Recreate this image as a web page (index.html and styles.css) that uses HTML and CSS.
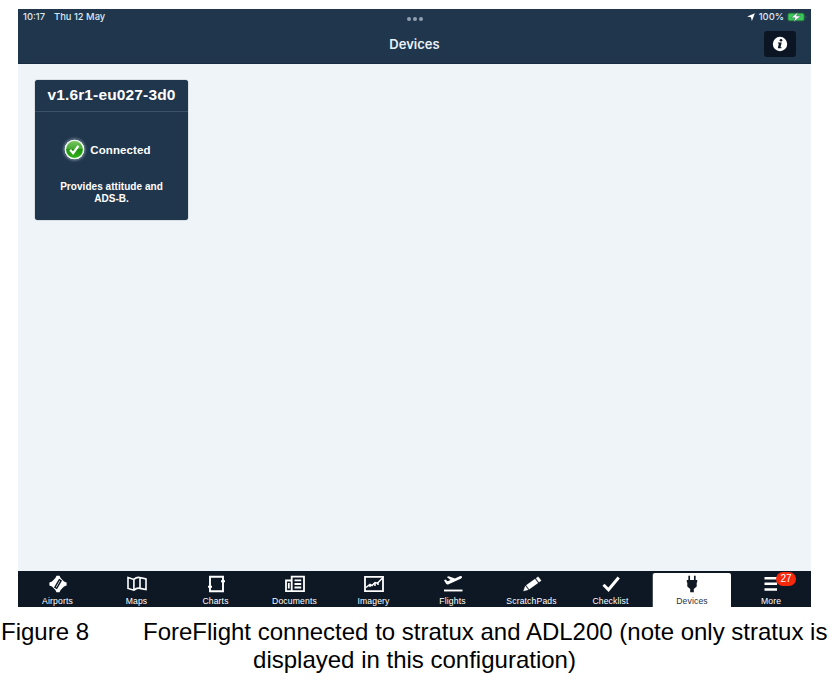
FILE: index.html
```html
<!DOCTYPE html>
<html lang="en">
<head>
  <meta charset="UTF-8">
  <meta name="viewport" content="width=device-width, initial-scale=1.0">
  <title>Devices</title>
  <link rel="stylesheet" href="styles.css">
</head>
<body>
  <figure class="figure">
    <div class="screen">
      <header class="header">
        <div class="status">
          <div class="status-left"><span class="time">10:17</span><span class="date">Thu 12 May</span></div>
          <div class="dots"><i></i><i></i><i></i></div>
          <div class="status-right">
            <svg class="location" viewBox="0 0 8 8"><path d="M7.9.2 4.9 7.9 3.9 4.3.1 3.5z"/></svg>
            <span class="percent">100%</span>
            <svg class="battery" viewBox="0 0 21 10">
              <rect x=".5" y=".5" width="18" height="9" rx="2.5" fill="#28783f"/>
              <rect x="1.5" y="1.5" width="16" height="7" rx="1.5" fill="#38c958"/>
              <path d="M19.7 3.5q1.2 1.5 0 3z" fill="#63788a"/>
              <path d="M11.3 0 4.5 5.8h4L7.3 10l7.1-6H10z" fill="#fff" stroke="#20364d" stroke-width=".4"/>
            </svg>
          </div>
        </div>
        <div class="titlebar">
          <h1>Devices</h1>
          <button class="info-btn" aria-label="Info">
            <svg viewBox="0 0 16 16">
              <circle cx="8" cy="8" r="7.2" fill="#fff"/>
              <circle cx="9" cy="4.2" r="1.3" fill="#0b1523"/>
              <path d="M6 6.5h3.7L8.5 11.2h1.2L9.2 12.2H5.8l1.1-4.8H5.8z" fill="#0b1523"/>
            </svg>
          </button>
        </div>
      </header>

      <main class="content">
        <section class="card">
          <h2>v1.6r1-eu027-3d0</h2>
          <div class="state">
            <svg class="check" viewBox="0 0 20 20">
              <defs>
                <linearGradient id="green" x1="0" y1="0" x2="0" y2="1">
                  <stop offset="0" stop-color="#7cc762"/>
                  <stop offset=".48" stop-color="#45a831"/>
                  <stop offset=".5" stop-color="#1e920f"/>
                  <stop offset="1" stop-color="#35b51d"/>
                </linearGradient>
              </defs>
              <circle cx="10" cy="10" r="8.8" fill="url(#green)" stroke="#eef7ee" stroke-width="1.6"/>
              <path d="m5.8 10.2 2.9 3.3 5-7" fill="none" stroke="#fff" stroke-width="2.2"/>
            </svg>
            <span>Connected</span>
          </div>
          <p>Provides attitude and<br>ADS-B.</p>
        </section>
      </main>

      <nav class="tabs">
        <a class="tab">
          <svg viewBox="0 0 20 18">
            <path d="M8.5.8h3L12.6 3 16 6.4l2.6 1.1v3L16 11.6 12.6 15l-1.1 2.2h-3L7.4 15 4 11.6 1.4 10.5v-3L4 6.4 7.4 3z" fill="#fff"/>
            <path d="m11.3 4.7 1.8 1-4.4 7.6-1.8-1z" fill="#fff" stroke="#0e1824" stroke-width="1.4"/>
          </svg>
          <span>Airports</span>
        </a>
        <a class="tab">
          <svg viewBox="0 0 20 18"><path d="M1 2.6 6.8 4.4Q10 1.6 13 2.6l6 1.4v10.6l-6-1.2Q10 12.5 7 15.2L1 13.4zM6.9 4.4V15M13 2.6v10.8" fill="none" stroke="#fff" stroke-width="1.6"/></svg>
          <span>Maps</span>
        </a>
        <a class="tab">
          <svg viewBox="0 0 20 18"><path d="M4 10V1.7h13V5M17 8v8.3H4V13M15 6.2h4M2 11.8h4M4 10v3M17 5v3" fill="none" stroke="#fff" stroke-width="1.9"/></svg>
          <span>Charts</span>
        </a>
        <a class="tab">
          <svg viewBox="0 0 20 18"><path d="M6.7 1.7H19v14.5H6.7zM6.7 5.5H1v10.7h5.7M3.8 8v5.5M9.5 5.4h6.7M9.5 9h6.7M9.5 12.5h6.7" fill="none" stroke="#fff" stroke-width="1.8"/></svg>
          <span>Documents</span>
        </a>
        <a class="tab">
          <svg viewBox="0 0 20 18"><path d="M1 1.8h18v14.4H1z" fill="none" stroke="#fff" stroke-width="1.8"/><path d="m2 12.5 4-3 2 1 3-3 2.5.7L18.5 3M6 9v3M11 7.5v3.5M14 7v3" fill="none" stroke="#fff" stroke-width="1.5"/></svg>
          <span>Imagery</span>
        </a>
        <a class="tab">
          <svg viewBox="0 0 20 18"><path d="M1 15.5h18.5" stroke="#fff" stroke-width="1.9"/><path d="m1 5.2 1.4-.6 2.2 1.6 3-1.3-3.8-3 1.9-.7 6.2 2.2 4.8-2.1q1.8-.6 2.3.4t-1.3 2L5.1 9.5q-1.2.4-2-.7z" fill="#fff"/></svg>
          <span>Flights</span>
        </a>
        <a class="tab">
          <svg viewBox="0 0 20 18"><path d="m1.5 16 1.8-5 3 3.8zM4.2 10.3 13 4l3 3.9-8.8 6.3zM14 3.3 16.2 1.7l3 3.9L17 7.2z" fill="#fff" stroke="#fff" stroke-width=".3"/></svg>
          <span>ScratchPads</span>
        </a>
        <a class="tab">
          <svg viewBox="0 0 20 18"><path d="m2.5 9.8 5 5L17.7 2.5" fill="none" stroke="#fff" stroke-width="3"/></svg>
          <span>Checklist</span>
        </a>
        <a class="tab active">
          <svg viewBox="0 0 20 18"><path d="M7.2.8v5M12.8.8v5" stroke="#111a24" stroke-width="1.7"/><path d="M4.8 5h10.4v2.6h-.5v4L11.8 14v3.2H8.2V14l-2.9-2.4v-4h-.5z" fill="#111a24"/></svg>
          <span>Devices</span>
        </a>
        <a class="tab">
          <svg viewBox="0 0 20 18"><path d="M3.5 3.2H16M3.5 8.8H16M3.5 14.4H16" stroke="#fff" stroke-width="2.5"/></svg>
          <span>More</span>
          <b class="badge">27</b>
        </a>
      </nav>
    </div>
    <figcaption class="caption">
      <span class="number">Figure 8</span>
      <span class="caption-text">ForeFlight connected to stratux and ADL200 (note only stratux is</span>
      <span class="caption-end">displayed in this configuration)</span>
    </figcaption>
  </figure>
</body>
</html>
```
FILE: styles.css
```css
* { box-sizing:border-box; }
body { margin:0; background:#fff; font-family:"Liberation Sans", Arial, sans-serif; overflow:hidden; }
h1, h2, p { margin:0; }
svg { display:block; flex:none; }

.figure { margin:0; padding-top:9px; }
.screen { width:793px; height:598px; margin-left:18px; display:flex; flex-direction:column; background:#eff4f8; }

.header { height:55px; background:#20364d; color:#fff; border-bottom:1px solid #192b3e; }
.status { height:16px; padding:0 4px 0 5px; display:grid; grid-template-columns:1fr auto 1fr; align-items:center; font:500 9.4px/16px Inter, sans-serif; color:#dce7f0; }
.status-left { display:flex; gap:9px; }
.dots { display:flex; gap:2px; padding-top:3px; }
.dots i { width:4px; height:4px; border-radius:50%; background:#8fa0b1; }
.status-right { display:flex; justify-content:flex-end; align-items:center; }
.location { width:8px; height:8px; fill:#fff; margin-right:4px; }
.percent { margin-right:3px; }
.battery { width:20px; height:10px; }
.titlebar { height:38px; padding:0 15px; display:grid; grid-template-columns:1fr auto 1fr; align-items:center; }
.titlebar h1 { grid-column:2; font:600 13px/38px Inter, sans-serif; color:#e8f1f8; }
.info-btn { justify-self:end; width:32px; height:26px; padding:0; border:0; border-radius:3px; background:#0b1523; display:flex; align-items:center; justify-content:center; }
.info-btn svg { width:16px; height:16px; }

.content { flex:1; padding:16px 17px; }
.card { width:153px; height:140px; border-radius:3px; background:#20364d; color:#fff; text-align:center; box-shadow:0 0 1px #14212f; }
.card h2 { height:32px; font-size:15.5px; letter-spacing:.15px; line-height:29px; border-bottom:1px solid #3d5166; }
.state { height:75px; padding-right:8px; display:flex; align-items:center; justify-content:center; gap:5px; font-size:11.5px; letter-spacing:.1px; font-weight:bold; }
.check { width:21px; height:21px; border-radius:50%; box-shadow:0 0 3px #a8b9c4; }
.card p { margin-top:-6px; font-size:10px; letter-spacing:.05px; font-weight:bold; line-height:12px; }

.tabs { height:36px; display:grid; grid-template-columns:repeat(8, 79px) 81px 1fr; background:#0e1824; color:#fff; }
.tab { position:relative; display:flex; flex-direction:column; align-items:center; padding-top:4px; font-size:8.6px; letter-spacing:.15px; line-height:10px; }
.tab svg { width:20px; height:18px; margin-bottom:3px; }
.active { margin:2px 0 0 3px; padding-top:2px; background:#fff; color:#26303a; border-radius:2px 2px 0 0; box-shadow:-1px 0 #465059; }
.badge { position:absolute; left:45px; top:1px; width:20px; height:14px; border-radius:7px; background:#f7290d; font-size:10px; font-weight:normal; letter-spacing:0; line-height:14px; text-align:center; }

.caption { display:grid; grid-template-columns:141px 1fr; padding:11px 0 0 2px; font-size:24px; line-height:28px; white-space:nowrap; color:#000; }
.number { margin-left:-1px; }
.caption-end { grid-column:1 / 3; padding-right:6px; text-align:center; }
```
